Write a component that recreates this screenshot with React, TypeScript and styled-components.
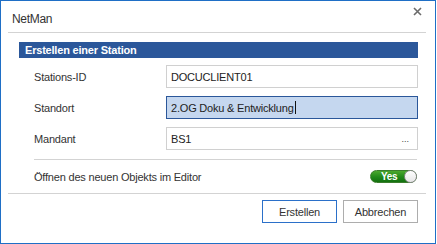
import React from "react";
import styled, { createGlobalStyle } from "styled-components";

const Global = createGlobalStyle`
  html, body { margin: 0; padding: 0; background: #ffffff; }
  body { font-family: "Liberation Sans", Arial, sans-serif; }
  * { box-sizing: border-box; }
`;

const Window = styled.div`
  width: 436px;
  height: 244px;
  border: 1px solid #1f6fc6;
  background: #ffffff;
  display: flex;
  flex-direction: column;
  font-family: "Liberation Sans", Arial, sans-serif;
  font-size: 11px;
  letter-spacing: -0.2px;
  color: #333333;
`;

const TitleBar = styled.div`
  height: 31px;
  display: flex;
  justify-content: space-between;
  align-items: flex-start;
  padding-left: 11px;
`;

const Title = styled.span`
  font-size: 12px;
  letter-spacing: -0.3px;
  line-height: 16px;
  margin-top: 10px;
  color: #333333;
`;

const CloseButton = styled.button`
  width: 9px;
  height: 9px;
  margin: 6px 13px 0 0;
  padding: 0;
  border: none;
  background: transparent;
  display: flex;
`;

const Rule = styled.div<{ $inset?: boolean }>`
  height: 1px;
  flex: none;
  background: #d3d3d3;
  margin: ${(p) => (p.$inset ? "0 1px 0 15px" : "0 9px 0 7px")};
`;

const Content = styled.div`
  padding: 9px 17px 0 18px;
  display: flex;
  flex-direction: column;
`;

const SectionHeader = styled.div`
  height: 16px;
  line-height: 16px;
  background: #2b579a;
  color: #ffffff;
  font-weight: bold;
  padding-left: 6px;
`;

const Form = styled.div`
  display: grid;
  grid-template-columns: 132px 1fr;
  row-gap: 8px;
  margin: 7px 0 9px 15px;
  align-items: center;
`;

const Label = styled.label`
  color: #333333;
  line-height: 14px;
  padding-top: 1px;
`;

const Field = styled.div<{ $focused?: boolean }>`
  height: 23px;
  display: flex;
  align-items: center;
  justify-content: space-between;
  padding: 0 8px 0 4px;
  border: 1px solid ${(p) => (p.$focused ? "#2b579a" : "#d0d0d0")};
  background: ${(p) => (p.$focused ? "#c5d7ef" : "#ffffff")};
  color: #222222;
`;

const FieldText = styled.span`
  display: flex;
  align-items: center;
`;

const Caret = styled.span`
  width: 1px;
  height: 13px;
  background: #111111;
  margin-left: 1px;
`;

const Ellipsis = styled.span`
  font-size: 9px;
  color: #444444;
  letter-spacing: 0;
`;

const ToggleRow = styled.div`
  height: 33px;
  display: flex;
  align-items: center;
  justify-content: space-between;
  margin: 0 1px 0 15px;
`;

const Toggle = styled.div`
  width: 47px;
  height: 13px;
  border-radius: 7px;
  background: linear-gradient(to bottom, #4ba82e 0%, #21891a 55%, #147010 100%);
  border: 1px solid #3a7d2c;
  display: flex;
  align-items: center;
  justify-content: space-between;
  padding-left: 10px;
  position: relative;
`;

const ToggleLabel = styled.span`
  color: #ffffff;
  font-weight: bold;
  font-size: 10px;
  letter-spacing: -0.3px;
  line-height: 11px;
`;

const Knob = styled.span`
  width: 13px;
  height: 13px;
  margin-right: -1px;
  border-radius: 50%;
  background: linear-gradient(to bottom, #ffffff, #e6e6e6);
  border: 1px solid #8a8a8a;
`;

const Footer = styled.div`
  display: flex;
  justify-content: flex-end;
  gap: 6px;
  padding: 6px 17px 0 0;
`;

const Button = styled.button<{ $primary?: boolean }>`
  width: 75px;
  height: 23px;
  border: 1px solid ${(p) => (p.$primary ? "#2b70c9" : "#adadad")};
  background: #ffffff;
  color: #333333;
  font-family: "Liberation Sans", Arial, sans-serif;
  font-size: 11px;
  letter-spacing: -0.2px;
  padding: 0;
`;

export default function App() {
  return (
    <>
      <Global />
      <Window>
        <TitleBar>
          <Title>NetMan</Title>
          <CloseButton aria-label="Schließen">
            <svg width="9" height="9" viewBox="0 0 9 9">
              <path d="M1 1 L8 8 M8 1 L1 8" stroke="#6b6b6b" strokeWidth="1.6" />
            </svg>
          </CloseButton>
        </TitleBar>
        <Rule />
        <Content>
          <SectionHeader>Erstellen einer Station</SectionHeader>
          <Form>
            <Label>Stations-ID</Label>
            <Field>
              <FieldText>DOCUCLIENT01</FieldText>
            </Field>
            <Label>Standort</Label>
            <Field $focused>
              <FieldText>
                2.OG Doku &amp; Entwicklung
                <Caret />
              </FieldText>
            </Field>
            <Label>Mandant</Label>
            <Field>
              <FieldText>BS1</FieldText>
              <Ellipsis>...</Ellipsis>
            </Field>
          </Form>
          <Rule $inset />
          <ToggleRow>
            <Label>Öffnen des neuen Objekts im Editor</Label>
            <Toggle>
              <ToggleLabel>Yes</ToggleLabel>
              <Knob />
            </Toggle>
          </ToggleRow>
        </Content>
        <Rule />
        <Footer>
          <Button $primary>Erstellen</Button>
          <Button>Abbrechen</Button>
        </Footer>
      </Window>
    </>
  );
}
